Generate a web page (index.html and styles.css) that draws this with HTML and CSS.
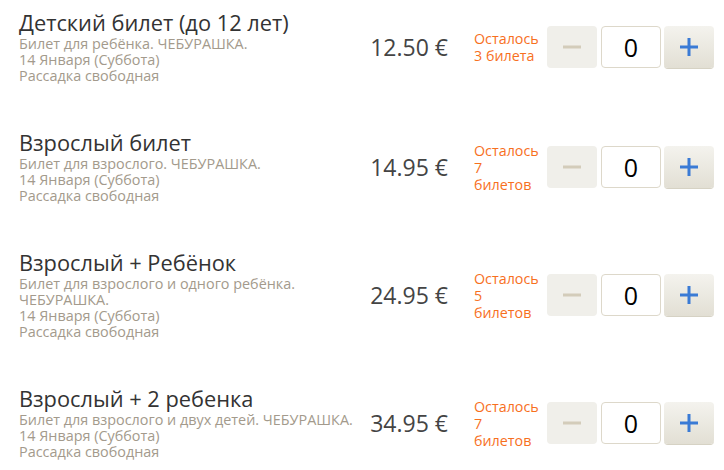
FILE: index.html
```html
<!DOCTYPE html>
<html lang="ru">
<head>
    <meta charset="UTF-8">
    <meta name="viewport" content="width=device-width, initial-scale=1.0">
    <title>Билеты</title>
    <link rel="stylesheet" href="styles.css">
</head>
<body>
    <div class="tickets">
        <div class="ticket">
            <div class="info">
                <h2 class="name">Детский билет (до 12 лет)</h2>
                <p class="desc">Билет для ребёнка. ЧЕБУРАШКА.</p>
                <p class="desc">14 Января (Суббота)</p>
                <p class="desc">Рассадка свободная</p>
            </div>
            <div class="price">12.50 €</div>
            <div class="stock">Осталось 3 билета</div>
            <div class="qty">
                <button type="button" class="btn minus" disabled><svg viewBox="0 0 18 18"><rect x="0" y="7.5" width="18" height="3"/></svg></button>
                <input type="text" class="count" value="0">
                <button type="button" class="btn plus"><svg viewBox="0 0 18 18"><rect x="0" y="7.5" width="18" height="3"/><rect x="7.5" y="0" width="3" height="18"/></svg></button>
            </div>
        </div>

        <div class="ticket">
            <div class="info">
                <h2 class="name">Взрослый билет</h2>
                <p class="desc">Билет для взрослого. ЧЕБУРАШКА.</p>
                <p class="desc">14 Января (Суббота)</p>
                <p class="desc">Рассадка свободная</p>
            </div>
            <div class="price">14.95 €</div>
            <div class="stock">Осталось 7 билетов</div>
            <div class="qty">
                <button type="button" class="btn minus" disabled><svg viewBox="0 0 18 18"><rect x="0" y="7.5" width="18" height="3"/></svg></button>
                <input type="text" class="count" value="0">
                <button type="button" class="btn plus"><svg viewBox="0 0 18 18"><rect x="0" y="7.5" width="18" height="3"/><rect x="7.5" y="0" width="3" height="18"/></svg></button>
            </div>
        </div>

        <div class="ticket">
            <div class="info">
                <h2 class="name">Взрослый + Ребёнок</h2>
                <p class="desc">Билет для взрослого и одного ребёнка. ЧЕБУРАШКА.</p>
                <p class="desc">14 Января (Суббота)</p>
                <p class="desc">Рассадка свободная</p>
            </div>
            <div class="price">24.95 €</div>
            <div class="stock">Осталось 5 билетов</div>
            <div class="qty">
                <button type="button" class="btn minus" disabled><svg viewBox="0 0 18 18"><rect x="0" y="7.5" width="18" height="3"/></svg></button>
                <input type="text" class="count" value="0">
                <button type="button" class="btn plus"><svg viewBox="0 0 18 18"><rect x="0" y="7.5" width="18" height="3"/><rect x="7.5" y="0" width="3" height="18"/></svg></button>
            </div>
        </div>

        <div class="ticket">
            <div class="info">
                <h2 class="name">Взрослый + 2 ребенка</h2>
                <p class="desc">Билет для взрослого и двух детей. ЧЕБУРАШКА.</p>
                <p class="desc">14 Января (Суббота)</p>
                <p class="desc">Рассадка свободная</p>
            </div>
            <div class="price">34.95 €</div>
            <div class="stock">Осталось 7 билетов</div>
            <div class="qty">
                <button type="button" class="btn minus" disabled><svg viewBox="0 0 18 18"><rect x="0" y="7.5" width="18" height="3"/></svg></button>
                <input type="text" class="count" value="0">
                <button type="button" class="btn plus"><svg viewBox="0 0 18 18"><rect x="0" y="7.5" width="18" height="3"/><rect x="7.5" y="0" width="3" height="18"/></svg></button>
            </div>
        </div>
    </div>
</body>
</html>
```

FILE: styles.css
```css
body {
    font-family: "Open Sans", Arial, sans-serif;
    margin: 0;
    background: #fff;
}

.tickets {
    padding: 10px 10px 0 19px;
}

.ticket {
    display: flex;
    align-items: center;
    margin-bottom: 46px;
}

.info {
    width: 340px;
}

.name {
    margin: 0;
    font-size: 21.8px;
    font-weight: normal;
    line-height: 26px;
    color: #333;
}

.desc {
    margin: 0;
    font-size: 14.4px;
    line-height: 16px;
    color: #a39a8c;
}

.price {
    width: 89px;
    text-align: right;
    font-size: 23px;
    color: #444;
}

.stock {
    width: 66px;
    margin-left: 26px;
    font-size: 14.3px;
    line-height: 17px;
    color: #f7701e;
}

.qty {
    display: flex;
    margin-left: 7px;
}

.btn {
    display: flex;
    align-items: center;
    justify-content: center;
    width: 50px;
    height: 42px;
    border: none;
    border-radius: 4px;
    padding: 0;
}

.btn svg {
    width: 18px;
    height: 18px;
}

.minus {
    background: #f0efea;
    fill: #d3ccba;
}

.plus {
    margin-left: 3px;
    background: linear-gradient(#f4f3ee, #e2dfd4);
    fill: #3a7bd5;
    box-shadow: 0 1px 0 #d6d2c4;
    cursor: pointer;
}

.count {
    width: 60px;
    height: 42px;
    margin-left: 4px;
    box-sizing: border-box;
    border: 1px solid #ddd8ca;
    border-radius: 4px;
    text-align: center;
    font-family: inherit;
    font-size: 25px;
    color: #000;
}
```
